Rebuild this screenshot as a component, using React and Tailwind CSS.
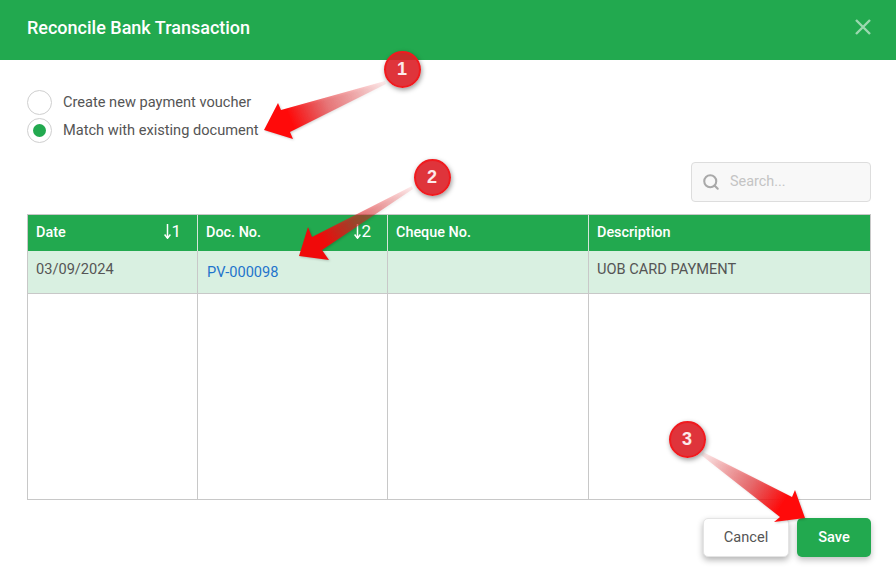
import { Search } from 'lucide-react';

function SortMark({ n }) {
  return (
    <span className="absolute right-[16px] top-[-1px] flex h-full items-center text-[17px] font-normal">
      <svg className="-translate-y-[1px]" width="7" height="15" viewBox="0 0 7 15" fill="none" stroke="currentColor" strokeWidth="1.5">
        <path d="M3.5 0v14" />
        <path d="M.6 10.5l2.9 3.7 2.9-3.7" />
      </svg>
      {n}
    </span>
  );
}

function Radio({ checked, label }) {
  return (
    <label className="flex h-[28px] items-center gap-[11px]">
      <span className="flex h-[25px] w-[25px] items-center justify-center rounded-full border border-[#cfcfcf] bg-white">
        {checked && <span className="h-[13px] w-[13px] rounded-full bg-[#22a94f]" />}
      </span>
      <span className="translate-y-[1px]">{label}</span>
    </label>
  );
}

function Badge({ n, className }) {
  return (
    <div
      className={`absolute flex h-[37px] w-[37px] items-center justify-center rounded-full border-2 border-[#f01a1e] bg-[#dc1e26]/90 pr-[1px] text-[18px] font-bold text-white/90 shadow-[1px_2px_5px_rgba(0,0,0,0.4)] ${className}`}
      style={{ fontFamily: '"Liberation Sans", sans-serif' }}
    >
      {n}
    </div>
  );
}

function Arrows() {
  return (
    <svg
      className="pointer-events-none absolute left-0 top-0 drop-shadow-[1px_1px_1px_rgba(0,0,0,0.2)]"
      width="896"
      height="581"
      viewBox="0 0 896 581"
    >
      <defs>
        <linearGradient id="a1" gradientUnits="userSpaceOnUse" x1="385" y1="81" x2="270" y2="128">
          <stop offset="0" stopColor="#f01a1e" stopOpacity="0.08" />
          <stop offset="0.5" stopColor="#e81a1e" stopOpacity="0.55" />
          <stop offset="0.82" stopColor="#ff0a0a" />
        </linearGradient>
        <linearGradient id="a2" gradientUnits="userSpaceOnUse" x1="412" y1="186" x2="305" y2="255">
          <stop offset="0" stopColor="#f01a1e" stopOpacity="0.08" />
          <stop offset="0.5" stopColor="#e01a1e" stopOpacity="0.6" />
          <stop offset="0.82" stopColor="#f00a0a" />
        </linearGradient>
        <linearGradient id="a3" gradientUnits="userSpaceOnUse" x1="703" y1="452" x2="800" y2="515">
          <stop offset="0" stopColor="#f01a1e" stopOpacity="0.08" />
          <stop offset="0.5" stopColor="#e81a1e" stopOpacity="0.6" />
          <stop offset="0.82" stopColor="#ff0a0a" />
        </linearGradient>
      </defs>
      <polygon points="385,81 386,84 290,132 293,139 264,130 278,103 281,110" fill="url(#a1)" />
      <polygon points="412,186 413,189 322,250 329,260 299,256 308,227 312,237" fill="url(#a2)" />
      <polygon points="703,452 701,455 780,517 774,522 805,518 795,490 792,497" fill="url(#a3)" />
    </svg>
  );
}

export default function App() {
  const th = 'relative h-[36px] border-r border-[#d5e5da] px-[8px] pb-[1px] text-left text-[14.4px] font-medium';
  const td = 'h-[43px] border-r border-b border-[#c8c8c8] px-[8px] align-top';

  return (
    <div
      className="relative h-[581px] w-[896px] overflow-hidden bg-white text-[14.6px] text-[#555]"
      style={{ fontFamily: 'Roboto, sans-serif' }}
    >
      <div className="flex h-[60px] items-center justify-between bg-[#22a94f] pb-[6px] pl-[27px] pr-[25px] text-white">
        <h1 className="text-[18px] font-medium">Reconcile Bank Transaction</h1>
        <svg width="16" height="16" viewBox="0 0 16 16" stroke="#ffffff" strokeOpacity="0.55" strokeWidth="2.4">
          <path d="M1 1l14 14M15 1 1 15" />
        </svg>
      </div>

      <div className="px-[25px] pt-[28px]">
        <div className="pl-[2px]">
          <Radio label="Create new payment voucher" />
          <Radio checked label="Match with existing document" />
        </div>

        <div className="mt-[18px] flex justify-end">
          <div className="flex h-[40px] w-[180px] items-center gap-[10px] rounded-[4px] border border-[#dddddd] bg-[#f8f8f8] pl-[10px]">
            <Search size={18} strokeWidth={2.75} className="shrink-0 text-[#a9a9a9]" />
            <input
              placeholder="Search..."
              className="w-[120px] bg-transparent text-[14.4px] outline-none placeholder:text-[#c4c4c4]"
            />
          </div>
        </div>

        <div className="ml-[2px] mt-[12px] w-[844px] border border-[#c8c8c8]">
          <table className="w-full table-fixed border-separate border-spacing-0">
            <colgroup>
              <col className="w-[170px]" />
              <col className="w-[190px]" />
              <col className="w-[201px]" />
              <col />
            </colgroup>
            <thead className="bg-[#22a94f] text-white">
              <tr>
                <th className={th}>
                  Date
                  <SortMark n="1" />
                </th>
                <th className={th}>
                  Doc. No.
                  <SortMark n="2" />
                </th>
                <th className={th}>Cheque No.</th>
                <th className="h-[36px] px-[8px] pb-[1px] text-left text-[14.4px] font-medium">Description</th>
              </tr>
            </thead>
            <tbody>
              <tr className="bg-[#d9f0e1]">
                <td className={`${td} pt-[8px]`}>03/09/2024</td>
                <td className={`${td} pl-[9px] pt-[11px] text-[#1f74cc]`}>PV-000098</td>
                <td className={td} />
                <td className="h-[43px] border-b border-[#c8c8c8] px-[8px] pt-[8px] align-top">UOB CARD PAYMENT</td>
              </tr>
              <tr>
                <td className="h-[205px] border-r border-[#c8c8c8]" />
                <td className="h-[205px] border-r border-[#c8c8c8]" />
                <td className="h-[205px] border-r border-[#c8c8c8]" />
                <td className="h-[205px]" />
              </tr>
            </tbody>
          </table>
        </div>

        <div className="mt-[18px] flex justify-end gap-[8px]">
          <button className="h-[39px] w-[86px] rounded-[5px] border border-[#e4e4e4] bg-white shadow-[0_3px_6px_rgba(0,0,0,0.3)]">
            Cancel
          </button>
          <button className="h-[39px] w-[74px] rounded-[5px] bg-[#22a94f] font-medium text-white shadow-[0_3px_6px_rgba(0,0,0,0.25)]">
            Save
          </button>
        </div>
      </div>

      <Arrows />
      <Badge n="1" className="left-[384px] top-[51px]" />
      <Badge n="2" className="left-[414px] top-[159px]" />
      <Badge n="3" className="left-[669px] top-[421px]" />
    </div>
  );
}
